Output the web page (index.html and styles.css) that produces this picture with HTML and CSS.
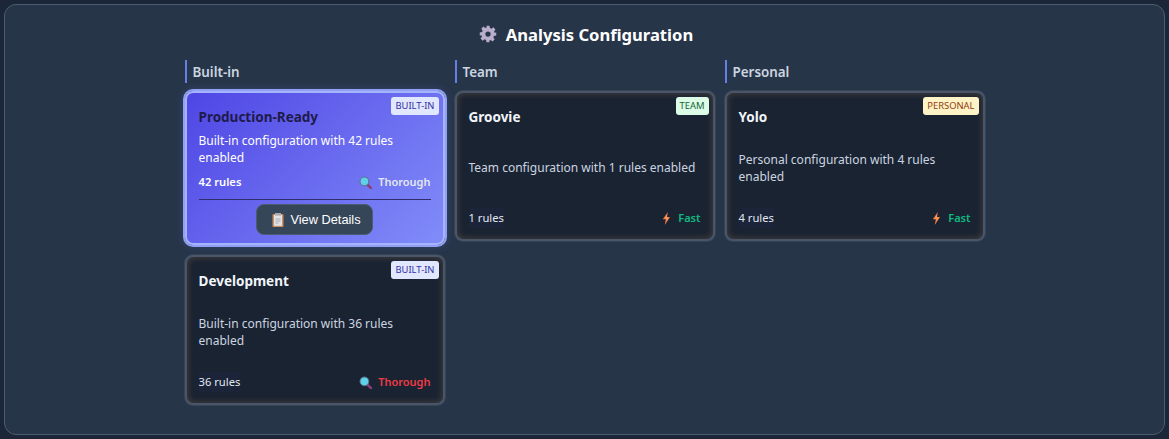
FILE: index.html
```html
<!DOCTYPE html>
<html>
<head>
    <meta charset="UTF-8">
    <meta name="viewport" content="width=device-width, initial-scale=1.0">
    <title>Analysis Configuration</title>
    <link rel="stylesheet" href="styles.css">
</head>
<body>

<svg class="icon-defs" width="0" height="0">
    <defs>
        <g id="icon-search">
            <path d="M8.4 8.6 L12 12.2" stroke="#8a3f78" stroke-width="2.4" stroke-linecap="round"/>
            <circle cx="5.4" cy="5.4" r="4.4" fill="#5fd0e8" stroke="#5a6f8a" stroke-width="1"/>
        </g>
        <g id="icon-bolt">
            <path d="M5.8 0 L0.8 7.2 L3.8 7.2 L2.8 13 L8 5 L5 5 Z" fill="#f4794a"/>
            <path d="M5.2 2.4 L2.8 6.4 L5 6.4 L4.2 10 L6.6 5.6 L4.4 5.6 Z" fill="#f9a84f"/>
        </g>
    </defs>
</svg>

<div class="panel">
    <h2 class="panel-title">
        <svg class="gear" viewBox="0 0 24 24" width="18" height="18">
            <path fill-rule="evenodd" fill="#b9adcc" d="M10 1h4l.6 3.1 1.9.8 2.6-1.8 2.8 2.8-1.8 2.6.8 1.9L23 10v4l-3.1.6-.8 1.9 1.8 2.6-2.8 2.8-2.6-1.8-1.9.8L14 23h-4l-.6-3.1-1.9-.8-2.6 1.8-2.8-2.8 1.8-2.6-.8-1.9L1 14v-4l3.1-.6.8-1.9-1.8-2.6 2.8-2.8 2.6 1.8 1.9-.8zM12 8.5a3.5 3.5 0 1 0 0 7 3.5 3.5 0 0 0 0-7z"/>
        </svg>
        Analysis Configuration
    </h2>

    <div class="columns">
        <div class="column">
            <div class="column-label">Built-in</div>

            <div class="card selected">
                <span class="badge badge-builtin">BUILT-IN</span>
                <div class="card-name">Production-Ready</div>
                <div class="card-desc">Built-in configuration with 42 rules enabled</div>
                <div class="card-meta">
                    <span class="rules">42 rules</span>
                    <span class="speed"><svg class="meta-icon" viewBox="0 0 13 13"><use href="#icon-search"/></svg>Thorough</span>
                </div>
                <div class="card-actions">
                    <button class="details-btn">
                        <svg class="clip" viewBox="0 0 12 14" width="12" height="14">
                            <rect x="0.5" y="1" width="11" height="13" rx="1" fill="#c98f63"/>
                            <rect x="2" y="2" width="8" height="10.8" fill="#e3e3e6"/>
                            <rect x="3" y="0" width="6" height="2.6" fill="#a9a9b0"/>
                            <path d="M3.5 6h5M3.5 8h5M3.5 10h3" stroke="#a9a9b0" stroke-width="1"/>
                        </svg>
                        View Details
                    </button>
                </div>
            </div>

            <div class="card">
                <span class="badge badge-builtin">BUILT-IN</span>
                <div class="card-name">Development</div>
                <div class="card-desc">Built-in configuration with 36 rules enabled</div>
                <div class="card-meta">
                    <span class="rules">36 rules</span>
                    <span class="speed slow"><svg class="meta-icon" viewBox="0 0 13 13"><use href="#icon-search"/></svg>Thorough</span>
                </div>
            </div>
        </div>

        <div class="column">
            <div class="column-label">Team</div>

            <div class="card">
                <span class="badge badge-team">TEAM</span>
                <div class="card-name">Groovie</div>
                <div class="card-desc">Team configuration with 1 rules enabled</div>
                <div class="card-meta">
                    <span class="rules">1 rules</span>
                    <span class="speed fast"><svg class="meta-icon bolt" viewBox="0 0 9 13"><use href="#icon-bolt"/></svg>Fast</span>
                </div>
            </div>
        </div>

        <div class="column">
            <div class="column-label">Personal</div>

            <div class="card">
                <span class="badge badge-personal">PERSONAL</span>
                <div class="card-name">Yolo</div>
                <div class="card-desc">Personal configuration with 4 rules enabled</div>
                <div class="card-meta">
                    <span class="rules">4 rules</span>
                    <span class="speed fast"><svg class="meta-icon bolt" viewBox="0 0 9 13"><use href="#icon-bolt"/></svg>Fast</span>
                </div>
            </div>
        </div>
    </div>
</div>

</body>
</html>
```

FILE: styles.css
```css
* {
    box-sizing: border-box;
}
body {
    font-family: "Noto Sans", "Open Sans", sans-serif;
    margin: 0;
    padding: 4px;
    height: 439px;
    overflow: hidden;
    background: #1b2638;
    color: #e2e8f0;
}
.icon-defs {
    position: absolute;
}
.panel {
    height: 431px;
    padding: 16px 0 0;
    background: #273549;
    border: 1px solid #4a5c70;
    border-radius: 12px;
}
.panel-title {
    display: flex;
    align-items: center;
    justify-content: center;
    gap: 9px;
    height: 26px;
    margin: 0 0 13px;
    padding-left: 3px;
    font-size: 16.6px;
    font-weight: 700;
    color: #fff;
}
.columns {
    display: grid;
    grid-template-columns: repeat(3, 260px);
    gap: 10px;
    justify-content: center;
}
.column {
    display: flex;
    flex-direction: column;
    gap: 10px;
}
.column-label {
    height: 23px;
    margin-bottom: -2px;
    padding-left: 6px;
    border-left: 2px solid #667eea;
    font-size: 13.4px;
    font-weight: 600;
    line-height: 24px;
    color: #cbd5e0;
}
.card {
    position: relative;
    display: flex;
    flex-direction: column;
    min-height: 150px;
    padding: 12px 12px 11px;
    background: #1a2332;
    border: 2px solid #4a5568;
    border-radius: 8px;
    box-shadow: 0 0 0 1px #354559, inset 0 0 7px rgba(255, 190, 110, 0.22);
}
.card.selected {
    min-height: 154px;
    padding-bottom: 6px;
    background: linear-gradient(135deg, #4f46e5, #818cf8);
    border-color: #a5b4fc;
    box-shadow: 0 0 0 2px #8fa0f5, 0 0 10px rgba(102, 126, 234, 0.35);
}
.badge {
    position: absolute;
    top: 4px;
    right: 4px;
    height: 18px;
    padding: 0 4px;
    border-radius: 3px;
    font-size: 9.4px;
    line-height: 18px;
}
.badge-builtin {
    background: #e0e7ff;
    color: #3730a3;
}
.badge-team {
    background: #dcfce7;
    color: #166534;
}
.badge-personal {
    background: #fef3c7;
    color: #92400e;
}
.card-name {
    margin-top: 2px;
    font-size: 13.5px;
    font-weight: 700;
    line-height: 20px;
    color: #f1f5f9;
}
.selected .card-name {
    color: #1e1b4b;
}
.card-desc {
    display: flex;
    flex: 1;
    align-items: center;
    font-size: 12px;
    line-height: 17px;
    color: #cbd5e0;
}
.selected .card-desc {
    flex: none;
    margin-top: 5px;
    color: #fff;
}
.card-meta {
    display: flex;
    align-items: center;
    justify-content: space-between;
    height: 20px;
    font-size: 11.2px;
    line-height: 20px;
}
.selected .card-meta {
    margin-top: 6px;
    font-weight: 600;
}
.rules {
    background: #1b2438;
    color: #e2e8f0;
}
.selected .rules {
    background: none;
    color: #fff;
}
.speed {
    display: flex;
    align-items: center;
    gap: 6px;
    font-size: 11px;
    font-weight: 600;
    color: #e2e8f0;
}
.speed.slow {
    color: #ef3b46;
}
.speed.fast {
    color: #10b981;
}
.meta-icon {
    width: 13px;
    height: 13px;
}
.meta-icon.bolt {
    width: 9px;
    margin-right: 1px;
}
.card-actions {
    display: flex;
    justify-content: center;
    margin-top: 7px;
    padding-top: 4px;
    border-top: 1px solid #2f2d6b;
}
.details-btn {
    display: flex;
    align-items: center;
    gap: 6px;
    height: 31px;
    padding: 0 11px 0 15px;
    background: #364659;
    border: 1px solid #4a5c70;
    border-radius: 8px;
    font-family: "Liberation Sans", sans-serif;
    font-size: 12.8px;
    color: #fff;
}
```
